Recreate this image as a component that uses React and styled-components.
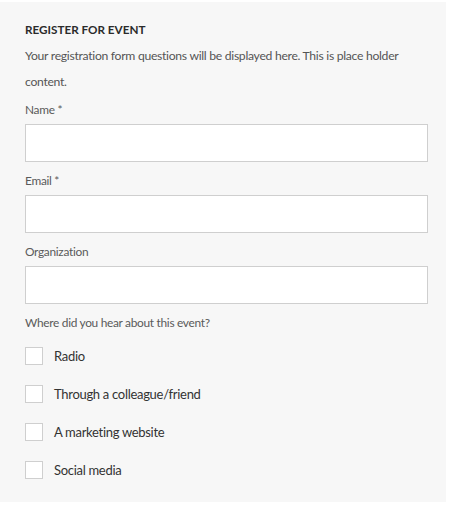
import styled, { createGlobalStyle } from 'styled-components';

const GlobalStyle = createGlobalStyle`
  body {
    margin: 0;
    background: #ffffff;
    font-family: Lato, "Open Sans", sans-serif;
  }
`;

const Panel = styled.div`
  margin-top: 2px;
  width: 446px;
  height: 500px;
  box-sizing: border-box;
  background-color: #f7f7f7;
  padding: 19px 18px 0 25px;
`;

const Title = styled.h2`
  margin: 0;
  font-size: 11.7px;
  line-height: 16px;
  font-weight: 700;
  color: #2b2b2b;
  text-transform: uppercase;
`;

const Intro = styled.p`
  margin: 6px 0 0 0;
  width: 385px;
  font-size: 12.2px;
  line-height: 26px;
  letter-spacing: -0.3px;
  color: #555;
`;

const Field = styled.div`
  display: flex;
  flex-direction: column;
  gap: 6px;
  margin-top: ${(p) => p.$top || 11}px;
`;

const Label = styled.label`
  font-size: 11.9px;
  line-height: 16px;
  letter-spacing: -0.3px;
  color: #5a5a5a;
`;

const Input = styled.input`
  box-sizing: border-box;
  width: 403px;
  height: 38px;
  margin: 0;
  border: 1px solid #cfcfcf;
  background: #fff;
  outline: none;
`;

const Options = styled.div`
  display: flex;
  flex-direction: column;
  gap: 20px;
  margin-top: 16px;
`;

const Option = styled.label`
  display: flex;
  align-items: center;
  gap: 11px;
  font-size: 13px;
  line-height: 18px;
  letter-spacing: -0.3px;
  color: #333;
`;

const Box = styled.span`
  box-sizing: border-box;
  width: 18px;
  height: 18px;
  border: 1px solid #cfcfcf;
  background: #fff;
`;

const options = ['Radio', 'Through a colleague/friend', 'A marketing website', 'Social media'];

export default function App() {
  return (
    <>
      <GlobalStyle />
      <Panel>
        <Title>Register for event</Title>
        <Intro>
          Your registration form questions will be displayed here. This is place holder content.
        </Intro>
        <Field $top={7}>
          <Label>Name *</Label>
          <Input type="text" />
        </Field>
        <Field>
          <Label>Email *</Label>
          <Input type="text" />
        </Field>
        <Field>
          <Label>Organization</Label>
          <Input type="text" />
        </Field>
        <Field>
          <Label>Where did you hear about this event?</Label>
        </Field>
        <Options>
          {options.map((o) => (
            <Option key={o}>
              <Box />
              {o}
            </Option>
          ))}
        </Options>
      </Panel>
    </>
  );
}
